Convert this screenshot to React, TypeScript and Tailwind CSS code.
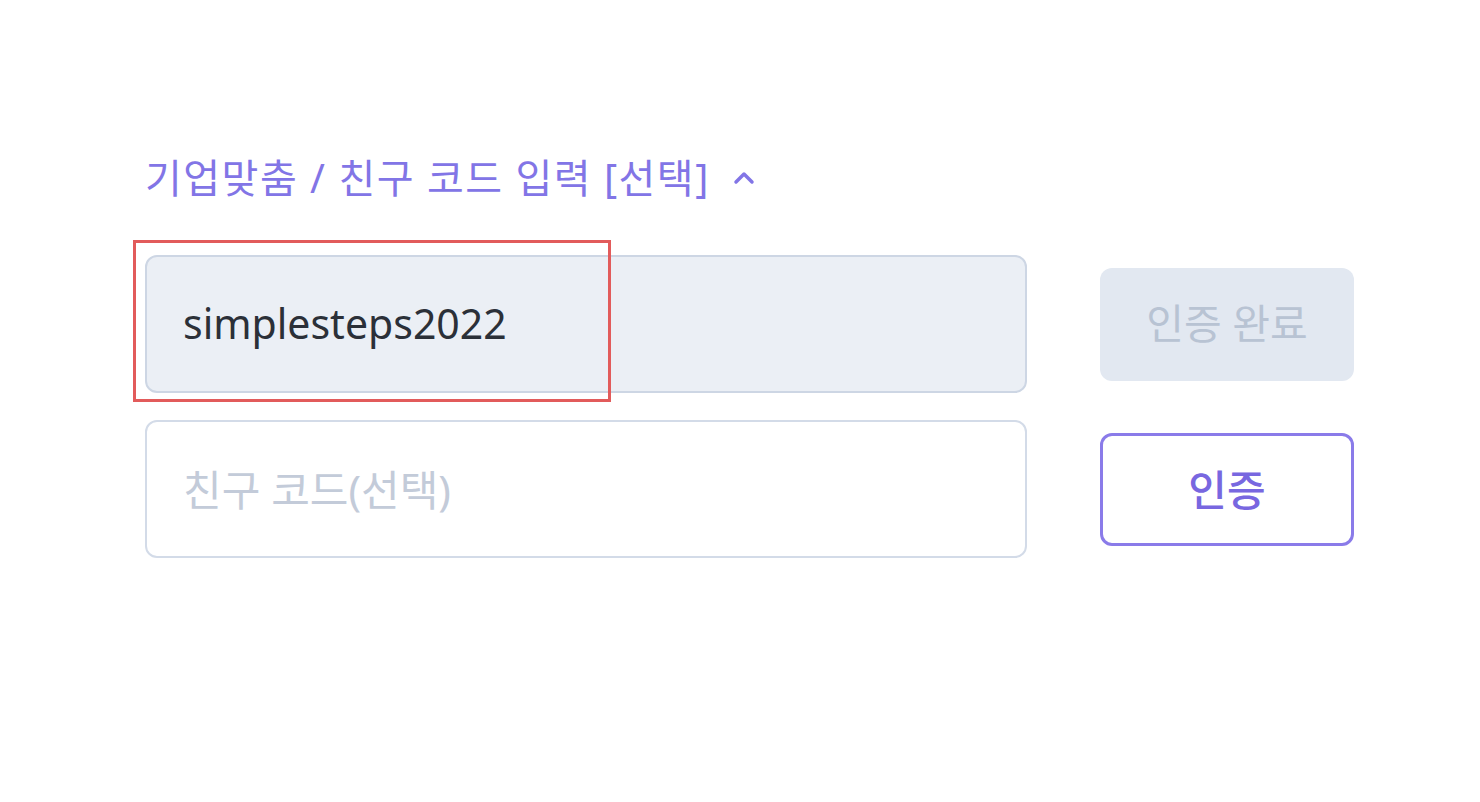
import React from "react";

const font = {
  fontFamily: '"Noto Sans", "Noto Sans CJK KR", sans-serif',
};

const App: React.FC = () => {
  return (
    <div
      className="h-[802px] w-[1480px] bg-white pl-[145px] pt-[150px]"
      style={font}
    >
      <button className="flex items-center gap-[22px] text-[40px] leading-[56px] font-normal tracking-[1.5px] text-[#8275e6]">
        <span>기업맞춤 / 친구 코드 입력 [선택]</span>
        <svg width="24" height="14" viewBox="0 0 24 14" fill="none">
          <path
            d="M4 11 L12 3 L20 11"
            stroke="#8275e6"
            strokeWidth="3.5"
            strokeLinecap="round"
            strokeLinejoin="round"
          />
        </svg>
      </button>

      <div className="mt-[49px] flex flex-col gap-[27px]">
        <div className="flex items-center gap-[73px]">
          <div className="relative">
            <div className="flex h-[138px] w-[882px] items-center rounded-[12px] border-2 border-[#cdd6e4] bg-[#ebeff5] px-[36px] text-[41px] text-[#2b3038]">
              simplesteps2022
            </div>
            <div className="absolute left-[-12px] top-[-15px] h-[162px] w-[478px] border-[3px] border-[#e25b5b]" />
          </div>
          <button className="h-[113px] w-[254px] rounded-[12px] bg-[#e2e8f1] text-[41px] font-normal text-[#b8c3d3]">
            인증 완료
          </button>
        </div>

        <div className="flex items-center gap-[73px]">
          <div className="flex h-[138px] w-[882px] items-center rounded-[12px] border-2 border-[#d3dbe8] bg-white px-[36px] text-[42px] text-[#c3cbd9]">
            친구 코드(선택)
          </div>
          <button className="h-[113px] w-[254px] rounded-[12px] border-[3px] border-[#8a7be9] bg-white text-[42px] font-medium text-[#7867e0]">
            인증
          </button>
        </div>
      </div>
    </div>
  );
};

export default App;
